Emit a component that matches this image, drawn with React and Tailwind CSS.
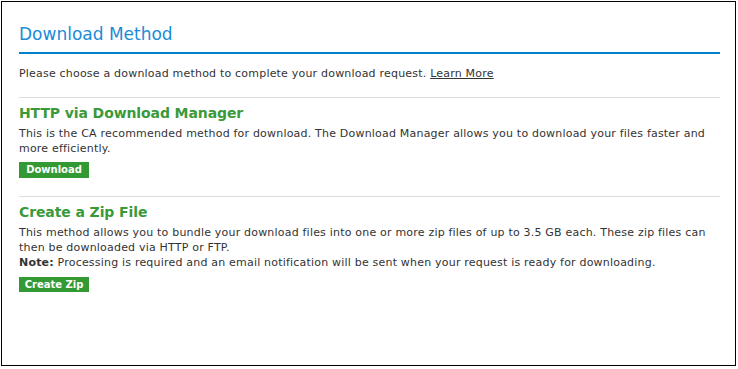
export default function App() {
  return (
    <div className="w-[738px] h-[369px] bg-white pt-px pl-px">
      <div
        className="w-[735px] h-[365px] border border-black bg-white pl-[17px] pr-[15px] pt-[20px]"
        style={{ fontFamily: '"DejaVu Sans", Verdana, sans-serif' }}
      >
        <h1 className="text-[17px] leading-[24px] text-[#1a8cd8] pb-[6px] border-b-2 border-[#0082c8]">
          Download Method
        </h1>
        <p className="text-[11px] leading-[15px] tracking-[0.2px] text-[#333] mt-[12px] pb-[16px] border-b border-[#dcdcdc]">
          Please choose a download method to complete your download request.{" "}
          <a className="underline text-[#333]">Learn More</a>
        </p>
        <div className="pt-[6px] pb-[18px] border-b border-[#dcdcdc]">
          <h2 className="text-[14px] leading-[18px] font-bold tracking-[-0.1px] text-[#3a9a3a]">HTTP via Download Manager</h2>
          <p className="text-[11px] leading-[15px] tracking-[0.2px] text-[#333] mt-[4px]">
            This is the CA recommended method for download. The Download Manager allows you to download your files faster and more efficiently.
          </p>
          <button className="mt-[6px] w-[70px] h-[16px] bg-[#339933] text-white text-[10px] font-bold leading-[16px] flex items-center justify-center">
            Download
          </button>
        </div>
        <div className="pt-[6px]">
          <h2 className="text-[14px] leading-[18px] font-bold tracking-[-0.1px] text-[#3a9a3a]">Create a Zip File</h2>
          <p className="text-[11px] leading-[15px] tracking-[0.2px] text-[#333] mt-[4px]">
            This method allows you to bundle your download files into one or more zip files of up to 3.5 GB each. These zip files can then be downloaded via HTTP or FTP.
            <br />
            <b className="font-bold">Note:</b> Processing is required and an email notification will be sent when your request is ready for downloading.
          </p>
          <button className="mt-[7px] w-[70px] h-[15px] bg-[#339933] text-white text-[10px] font-bold leading-[15px] flex items-center justify-center">
            Create Zip
          </button>
        </div>
      </div>
    </div>
  );
}
